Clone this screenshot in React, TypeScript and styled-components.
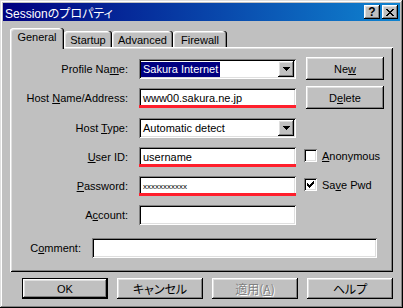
import React from 'react';
import styled, { createGlobalStyle, css } from 'styled-components';

const GlobalStyle = createGlobalStyle`
  html, body {
    margin: 0;
    padding: 0;
    background: #c0c0c0;
  }
  body {
    font-family: "Liberation Sans", "Noto Sans CJK JP", sans-serif;
    font-size: 11px;
    color: #000;
  }
  * {
    box-sizing: border-box;
  }
`;

// win98 bevels
const raised = css`
  box-shadow: inset -1px -1px #000, inset 1px 1px #fff, inset -2px -2px #808080,
    inset 2px 2px #dfdfdf;
`;

const sunken = css`
  box-shadow: inset 1px 1px #808080, inset -1px -1px #fff, inset 2px 2px #000,
    inset -2px -2px #dfdfdf;
`;

const Window = styled.div`
  width: 403px;
  height: 308px;
  padding: 3px;
  background: #c0c0c0;
  display: flex;
  flex-direction: column;
  box-shadow: inset -1px -1px #000, inset 1px 1px #dfdfdf, inset -2px -2px #808080,
    inset 2px 2px #fff;
`;

const TitleBar = styled.div`
  flex: none;
  height: 18px;
  display: flex;
  align-items: center;
  padding: 0 2px 0 2px;
  background: linear-gradient(90deg, #000080, #1084d0);
  color: #fff;
`;

const TitleText = styled.span`
  flex: 1;
  font-size: 12px;
  white-space: nowrap;
  font-feature-settings: 'palt';
`;

const CaptionButton = styled.div`
  width: 16px;
  height: 14px;
  background: #c0c0c0;
  ${raised};
  display: flex;
  align-items: center;
  justify-content: center;
  color: #000;
  font-weight: bold;
  font-size: 12px;
  line-height: 14px;
  & + & {
    margin-left: 2px;
  }
`;

const Body = styled.div`
  flex: 1;
  display: flex;
  flex-direction: column;
  padding: 7px 7px 0 7px;
`;

const TabStrip = styled.div`
  height: 19px;
  display: flex;
  align-items: flex-end;
`;

const Tab = styled.div<{ $width: number; $active?: boolean }>`
  width: ${p => p.$width}px;
  height: ${p => (p.$active ? 21 : 16)}px;
  margin-bottom: ${p => (p.$active ? -2 : 0)}px;
  padding-top: 2px;
  line-height: 14px;
  text-align: center;
  background: #c0c0c0;
  border-radius: 3px 3px 0 0;
  box-shadow: inset -1px 0 #000, inset -2px 0 #808080, inset 1px 1px #fff,
    inset 2px 2px #dfdfdf;
  ${p =>
    p.$active &&
    css`
      position: relative;
      z-index: 1;
    `}
`;

const Panel = styled.div`
  height: 225px;
  padding: 12px 0 0 2px;
  box-shadow: inset 1px 1px #fff, inset -1px -1px #000, inset 2px 2px #dfdfdf,
    inset -2px -2px #808080;
`;

const FormGrid = styled.div`
  display: grid;
  grid-template-columns: 127px 157px 88px;
  grid-template-rows: 20px 21px 20px 20px 20px 20px;
  row-gap: 9px;
`;

const FieldLabel = styled.label<{ $row: number }>`
  grid-column: 1;
  grid-row: ${p => p.$row};
  padding-right: 11px;
  line-height: 20px;
  text-align: right;
  white-space: nowrap;
`;

const fieldBase = css`
  height: 20px;
  background: #fff;
  ${sunken};
  display: flex;
  align-items: center;
  white-space: nowrap;
`;

const TextBox = styled.div<{ $row?: number; $marked?: boolean; $small?: boolean }>`
  ${fieldBase};
  position: relative;
  padding-left: 4px;
  grid-column: 2;
  grid-row: ${p => p.$row ?? 'auto'};
  font-size: ${p => (p.$small ? 8 : 11)}px;
  ${p =>
    p.$marked &&
    css`
      &::after {
        content: '';
        position: absolute;
        left: 0;
        right: 0;
        bottom: 0;
        height: 3px;
        background: #ff1f2c;
      }
    `}
`;

const ComboBox = styled.div<{ $row: number }>`
  ${fieldBase};
  padding: 2px;
  grid-column: 2;
  grid-row: ${p => p.$row};
`;

const ComboValue = styled.span<{ $selected?: boolean }>`
  flex: 1;
  display: flex;
  span {
    padding: 0 2px;
    line-height: 15px;
    background: ${p => (p.$selected ? '#000080' : 'transparent')};
    color: ${p => (p.$selected ? '#fff' : '#000')};
  }
`;

const DropButton = styled.div`
  width: 16px;
  height: 16px;
  flex: none;
  background: #c0c0c0;
  ${raised};
  display: flex;
  align-items: center;
  justify-content: center;
`;

const SideButtons = styled.div`
  grid-column: 3;
  grid-row: 1 / span 2;
  margin-top: -2px;
  padding-left: 10px;
  display: flex;
  flex-direction: column;
  gap: 6px;
`;

const PushButton = styled.div`
  width: 78px;
  height: 23px;
  background: #c0c0c0;
  ${raised};
  display: flex;
  align-items: center;
  justify-content: center;
`;

const CheckRow = styled.label<{ $row: number }>`
  grid-column: 3;
  grid-row: ${p => p.$row};
  align-self: start;
  margin-top: 2px;
  padding-left: 8px;
  display: flex;
  align-items: center;
  gap: 5px;
  white-space: nowrap;
`;

const CheckBox = styled.span`
  width: 13px;
  height: 13px;
  flex: none;
  background: #fff;
  ${sunken};
  display: flex;
  align-items: center;
  justify-content: center;
`;

const CommentRow = styled.div`
  margin-top: 13px;
  display: flex;
  align-items: center;
`;

const CommentLabel = styled.label`
  width: 80px;
  padding-right: 11px;
  text-align: right;
  white-space: nowrap;
`;

const CommentBox = styled.div`
  ${fieldBase};
  width: 285px;
`;

const ButtonBar = styled.div`
  margin-top: 6px;
  display: flex;
  justify-content: flex-end;
  gap: 9px;
`;

const DialogButton = styled.div<{ $default?: boolean; $disabled?: boolean }>`
  width: 86px;
  height: 21px;
  background: #c0c0c0;
  display: flex;
  align-items: center;
  justify-content: center;
  color: ${p => (p.$disabled ? '#808080' : '#000')};
  text-shadow: ${p => (p.$disabled ? '1px 1px #fff' : 'none')};
  ${p =>
    p.$default
      ? css`
          box-shadow: inset 0 0 0 1px #000, inset -2px -2px #000, inset 2px 2px #fff,
            inset -3px -3px #808080, inset 3px 3px #dfdfdf;
        `
      : raised};
`;

const Jp = styled.span`
  font-family: "Noto Sans CJK JP", sans-serif;
  font-size: 12px;
  font-feature-settings: 'palt';
`;

const CloseGlyph = () => (
  <svg width="8" height="7" viewBox="0 0 8 7" shapeRendering="crispEdges">
    <path
      fill="#000"
      d="M0 0h2v1H0zM6 0h2v1H6zM1 1h2v1H1zM5 1h2v1H5zM2 2h4v1H2zM3 3h2v1H3zM2 4h4v1H2zM1 5h2v1H1zM5 5h2v1H5zM0 6h2v1H0zM6 6h2v1H6z"
    />
  </svg>
);

const ArrowDown = () => (
  <svg width="7" height="4" viewBox="0 0 7 4" shapeRendering="crispEdges">
    <path fill="#000" d="M0 0h7v1H0zM1 1h5v1H1zM2 2h3v1H2zM3 3h1v1H3z" />
  </svg>
);

const CheckMark = () => (
  <svg width="7" height="7" viewBox="0 0 7 7" shapeRendering="crispEdges">
    <path
      fill="#000"
      d="M0 2h1v3H0zM1 3h1v3H1zM2 4h1v3H2zM3 3h1v3H3zM4 2h1v3H4zM5 1h1v3H5zM6 0h1v3H6z"
    />
  </svg>
);

const App = () => {
  return (
    <>
      <GlobalStyle />
      <Window>
        <TitleBar>
          <TitleText>
            Session<Jp>のプロパティ</Jp>
          </TitleText>
          <CaptionButton>?</CaptionButton>
          <CaptionButton>
            <CloseGlyph />
          </CaptionButton>
        </TitleBar>

        <Body>
          <TabStrip>
            <Tab $width={54} $active>
              General
            </Tab>
            <Tab $width={48}>Startup</Tab>
            <Tab $width={61}>Advanced</Tab>
            <Tab $width={54}>Firewall</Tab>
          </TabStrip>

          <Panel>
            <FormGrid>
              <FieldLabel $row={1}>
                Profile Na<u>m</u>e:
              </FieldLabel>
              <ComboBox $row={1}>
                <ComboValue $selected>
                  <span>Sakura Internet</span>
                </ComboValue>
                <DropButton>
                  <ArrowDown />
                </DropButton>
              </ComboBox>

              <SideButtons>
                <PushButton>
                  Ne<u>w</u>
                </PushButton>
                <PushButton>
                  D<u>e</u>lete
                </PushButton>
              </SideButtons>

              <FieldLabel $row={2}>
                Host <u>N</u>ame/Address:
              </FieldLabel>
              <TextBox $row={2} $marked>
                www00.sakura.ne.jp
              </TextBox>

              <FieldLabel $row={3}>
                Host <u>T</u>ype:
              </FieldLabel>
              <ComboBox $row={3}>
                <ComboValue>
                  <span>Automatic detect</span>
                </ComboValue>
                <DropButton>
                  <ArrowDown />
                </DropButton>
              </ComboBox>

              <FieldLabel $row={4}>
                <u>U</u>ser ID:
              </FieldLabel>
              <TextBox $row={4} $marked>
                username
              </TextBox>
              <CheckRow $row={4}>
                <CheckBox />
                <span>
                  <u>A</u>nonymous
                </span>
              </CheckRow>

              <FieldLabel $row={5}>
                <u>P</u>assword:
              </FieldLabel>
              <TextBox $row={5} $marked $small>
                xxxxxxxxxxx
              </TextBox>
              <CheckRow $row={5}>
                <CheckBox>
                  <CheckMark />
                </CheckBox>
                <span>
                  Sa<u>v</u>e Pwd
                </span>
              </CheckRow>

              <FieldLabel $row={6}>
                A<u>c</u>count:
              </FieldLabel>
              <TextBox $row={6} />
            </FormGrid>

            <CommentRow>
              <CommentLabel>
                C<u>o</u>mment:
              </CommentLabel>
              <CommentBox />
            </CommentRow>
          </Panel>

          <ButtonBar>
            <DialogButton $default>OK</DialogButton>
            <DialogButton>
              <Jp>キャンセル</Jp>
            </DialogButton>
            <DialogButton $disabled>
              <Jp>
                適用(<u>A</u>)
              </Jp>
            </DialogButton>
            <DialogButton>
              <Jp>ヘルプ</Jp>
            </DialogButton>
          </ButtonBar>
        </Body>
      </Window>
    </>
  );
};

export default App;
